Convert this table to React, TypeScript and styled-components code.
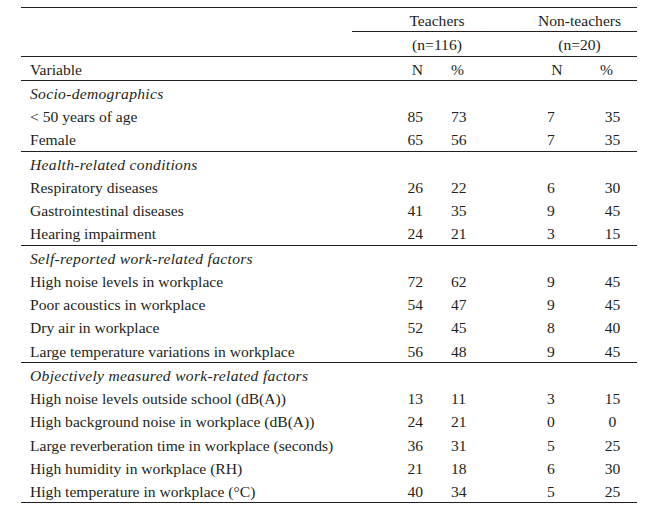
import styled, { createGlobalStyle } from "styled-components";

type Row = { label: string; n1: string; p1: string; n2: string; p2: string };
type Section = { title: string; rows: Row[] };

const sections: Section[] = [
  {
    title: "Socio-demographics",
    rows: [
      { label: "< 50 years of age", n1: "85", p1: "73", n2: "7", p2: "35" },
      { label: "Female", n1: "65", p1: "56", n2: "7", p2: "35" },
    ],
  },
  {
    title: "Health-related conditions",
    rows: [
      { label: "Respiratory diseases", n1: "26", p1: "22", n2: "6", p2: "30" },
      { label: "Gastrointestinal diseases", n1: "41", p1: "35", n2: "9", p2: "45" },
      { label: "Hearing impairment", n1: "24", p1: "21", n2: "3", p2: "15" },
    ],
  },
  {
    title: "Self-reported work-related factors",
    rows: [
      { label: "High noise levels in workplace", n1: "72", p1: "62", n2: "9", p2: "45" },
      { label: "Poor acoustics in workplace", n1: "54", p1: "47", n2: "9", p2: "45" },
      { label: "Dry air in workplace", n1: "52", p1: "45", n2: "8", p2: "40" },
      { label: "Large temperature variations in workplace", n1: "56", p1: "48", n2: "9", p2: "45" },
    ],
  },
  {
    title: "Objectively measured work-related factors",
    rows: [
      { label: "High noise levels outside school (dB(A))", n1: "13", p1: "11", n2: "3", p2: "15" },
      { label: "High background noise in workplace (dB(A))", n1: "24", p1: "21", n2: "0", p2: "0" },
      { label: "Large reverberation time in workplace (seconds)", n1: "36", p1: "31", n2: "5", p2: "25" },
      { label: "High humidity in workplace (RH)", n1: "21", p1: "18", n2: "6", p2: "30" },
      { label: "High temperature in workplace (°C)", n1: "40", p1: "34", n2: "5", p2: "25" },
    ],
  },
];

function App() {
  return (
    <>
      <GlobalStyle />
      <Table>
        <colgroup>
          <col style={{ width: 331 }} />
          <col style={{ width: 85 }} />
          <col style={{ width: 85 }} />
          <col style={{ width: 58 }} />
          <col style={{ width: 57 }} />
        </colgroup>
        <thead>
          <tr>
            <Td />
            <GroupHead colSpan={2} $line>
              Teachers
            </GroupHead>
            <GroupHead colSpan={2} $line>
              Non-teachers
            </GroupHead>
          </tr>
          <tr>
            <Td $line />
            <GroupHead colSpan={2} $line>
              (n=116)
            </GroupHead>
            <GroupHead colSpan={2} $line>
              (n=20)
            </GroupHead>
          </tr>
          <tr>
            <Label $line>Variable</Label>
            <NumLeft $line>N</NumLeft>
            <NumRight $line>%</NumRight>
            <NumSmall $line $shift={6}>N</NumSmall>
            <NumSmall $line $shift={-2}>%</NumSmall>
          </tr>
        </thead>
        <tbody>
          {sections.map((s) => (
            <Section key={s.title} title={s.title} rows={s.rows} />
          ))}
        </tbody>
      </Table>
    </>
  );
}

function Section({ title, rows }: Section) {
  return (
    <>
      <tr>
        <SectionTitle colSpan={5}>{title}</SectionTitle>
      </tr>
      {rows.map((r, i) => {
        const last = i === rows.length - 1;
        return (
          <tr key={r.label}>
            <Label $line={last}>{r.label}</Label>
            <NumLeft $line={last}>{r.n1}</NumLeft>
            <NumRight $line={last}>{r.p1}</NumRight>
            <NumSmall $line={last} $shift={0}>
              {r.n2}
            </NumSmall>
            <NumSmall $line={last} $shift={4}>
              {r.p2}
            </NumSmall>
          </tr>
        );
      })}
    </>
  );
}

export default App;

const GlobalStyle = createGlobalStyle`
  body {
    margin: 0;
    background: #ffffff;
    color: #231f20;
    font-family: "Liberation Serif", "Times New Roman", serif;
  }
`;

const Table = styled.table`
  margin: 7px 0 0 21px;
  width: 616px;
  table-layout: fixed;
  border-collapse: collapse;
  border-top: 1px solid #231f20;
  font-size: 15.6px;
`;

const Td = styled.td<{ $line?: boolean }>`
  padding: 2px 0 0 0;
  line-height: 21.25px;
  vertical-align: top;
  white-space: nowrap;
  border-bottom: ${(p) => (p.$line ? "1px solid #231f20" : "none")};
`;

const GroupHead = styled(Td)`
  text-align: center;
`;

const Label = styled(Td)`
  padding-left: 9px;
`;

const SectionTitle = styled(Td)`
  padding-left: 9px;
  font-style: italic;
  letter-spacing: 0.3px;
`;

const NumLeft = styled(Td)`
  text-align: right;
  padding-right: 14px;
`;

const NumRight = styled(Td)`
  text-align: left;
  padding-left: 14px;
`;

const NumSmall = styled(Td)<{ $shift: number }>`
  text-align: center;
  padding-left: ${(p) => Math.max(p.$shift, 0) * 2}px;
  padding-right: ${(p) => Math.max(-p.$shift, 0) * 2}px;
`;
